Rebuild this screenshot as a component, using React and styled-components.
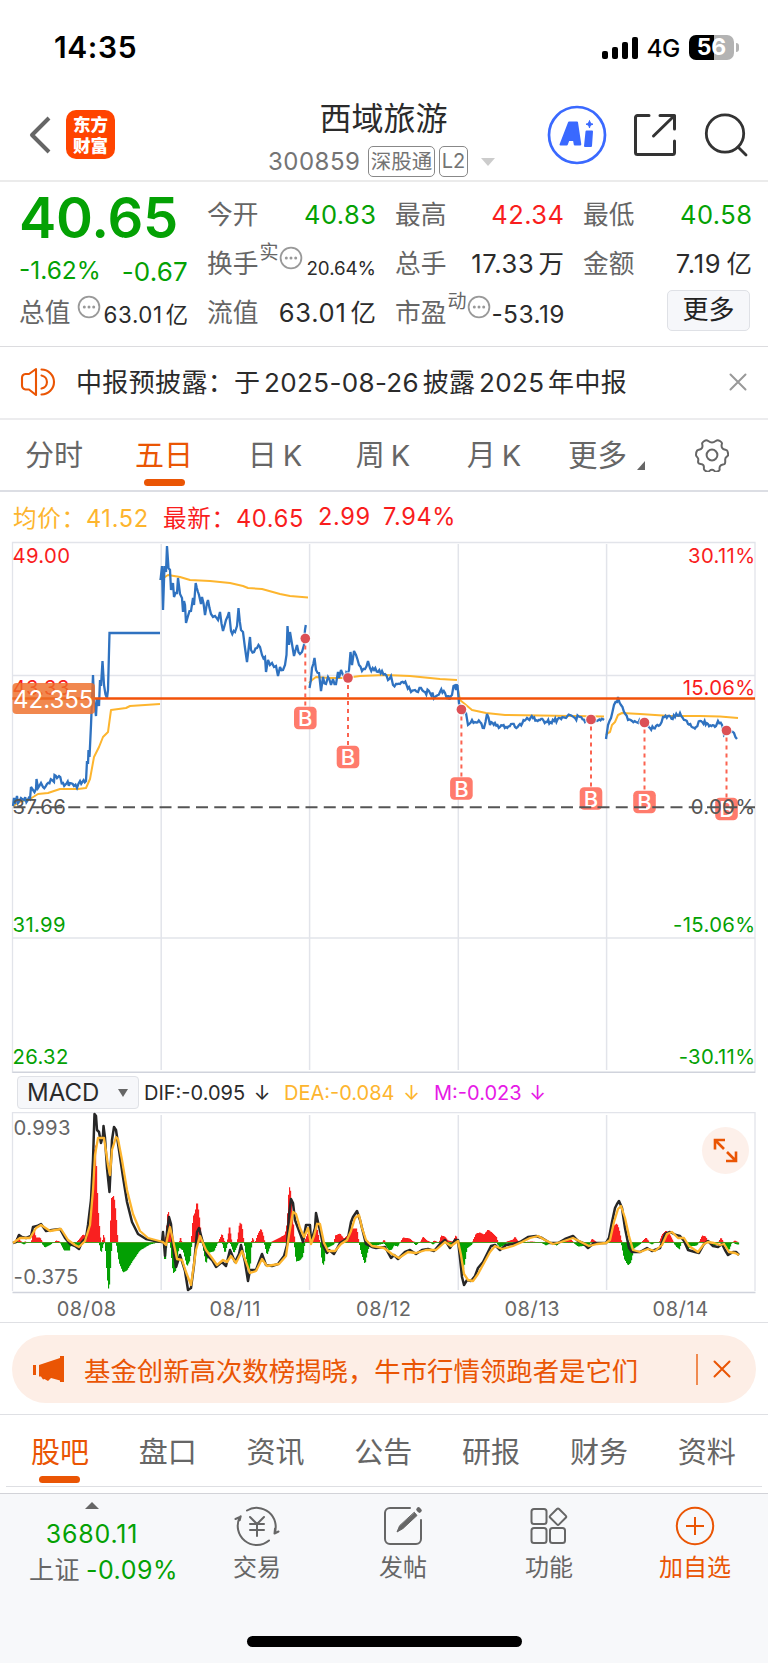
import React from "react";
import styled, { createGlobalStyle } from "styled-components";

const ORANGE = "#ea5504";
const GREEN = "#04a104";
const RED = "#f91d1d";
const BLUE = "#2f72c0";
const YELLOW = "#fdb52e";
const GRAY = "#666";
const INK = "#2b2b2b";
const FONT = 'Inter, "Noto Sans CJK SC", sans-serif';

const Global = createGlobalStyle`
  * { box-sizing: border-box; }
  body { margin: 0; background: #fff; font-family: ${FONT}; color: ${INK}; }
  svg { display: block; flex: none; }
  svg text { font-family: ${FONT}; }
`;

const Screen = styled.main`
  width: 768px;
  height: 1663px;
  display: flex;
  flex-direction: column;
  overflow: hidden;
  white-space: nowrap;
`;

/* ---------- status bar ---------- */
const StatusBar = styled.header`
  height: 95px;
  flex: none;
  display: flex;
  justify-content: space-between;
  padding: 0 29px 0 54px;
  color: #000;
`;
const Clock = styled.time`
  font-size: 30px;
  font-weight: 600;
  line-height: 95px;
  letter-spacing: 0.6px;
`;
const StatusIcons = styled.div`
  display: flex;
  align-items: center;
  height: 95px;
`;
const Signal = styled.div`
  display: flex;
  align-items: flex-end;
  gap: 3.7px;
  margin-right: 9px;
`;
const SignalBar = styled.i`
  width: 6px;
  height: ${(p) => p.$h}px;
  border-radius: 2px;
  background: #000;
`;
const Network = styled.span`
  font-size: 24.5px;
  font-weight: 500;
  width: 42.5px;
  letter-spacing: -0.5px;
`;
const Battery = styled.div`
  width: 45px;
  height: 25px;
  border-radius: 7px;
  background: linear-gradient(90deg, #000 56%, #b3b3b3 56%);
  color: #fff;
  font-size: 23px;
  font-weight: 700;
  line-height: 25px;
  text-align: center;
`;
const BatteryTip = styled.i`
  width: 3px;
  height: 9px;
  margin-left: 2px;
  border-radius: 0 4px 4px 0;
  background: #b3b3b3;
`;

/* ---------- title bar ---------- */
const TitleBar = styled.div`
  height: 87px;
  flex: none;
  display: flex;
  align-items: flex-start;
  border-bottom: 2px solid #ebebeb;
`;
const BackSide = styled.div`
  display: flex;
  align-items: center;
  width: 268px;
  padding: 15px 0 0 29px;
  gap: 15px;
`;
const BrandLogo = styled.div`
  width: 49px;
  height: 49px;
  border-radius: 10px;
  background: #ff4400;
  color: #fff;
  font: 900 17.5px/20.5px "Noto Sans CJK SC", sans-serif;
  text-align: center;
  padding-top: 4px;
`;
const TitleBlock = styled.div`
  width: 231px;
  display: flex;
  flex-direction: column;
`;
const StockName = styled.h1`
  margin: 0;
  width: 231px;
  text-align: center;
  font-size: 32px;
  line-height: 48px;
  font-weight: 400;
`;
const StockMeta = styled.div`
  display: flex;
  align-items: center;
  height: 37px;
  padding-top: 0;
  color: #747474;
`;
const StockCode = styled.span`
  font-size: 24px;
  width: 100px;
  letter-spacing: 0.5px;
`;
const Badge = styled.span`
  height: 31px;
  width: ${(p) => p.$w}px;
  margin-right: 4px;
  border: 1px solid #888;
  border-radius: 5px;
  font-size: ${(p) => p.$size}px;
  line-height: 29px;
  text-align: center;
`;
const DropMark = styled.i`
  margin-left: 9px;
  border: 7px solid transparent;
  border-top: 8px solid #ccc;
  border-bottom: 0;
`;
const TitleActions = styled.div`
  display: flex;
  align-items: center;
  gap: 26px;
  padding: 10px 0 0 48px;
`;

/* ---------- quote ---------- */
const Quote = styled.section`
  height: 165px;
  flex: none;
  display: grid;
  grid-template-columns: 169px 169px 169px 169px;
  column-gap: 19px;
  padding: 8px 16px 0 19px;
  border-bottom: 1px solid #dcdcdf;
`;
const QuoteColumn = styled.div`
  display: flex;
  flex-direction: column;
`;
const Price = styled.strong`
  height: 55px;
  font-size: 56px;
  line-height: 56px;
  font-weight: 600;
  color: ${GREEN};
  letter-spacing: -0.2px;
`;
const Change = styled.div`
  height: 43px;
  padding-top: 7px;
  display: flex;
  justify-content: space-between;
  align-items: center;
  color: ${GREEN};
  font-size: 24.5px;
`;
const ChangeAmount = styled.span`
  font-size: 26px;
  letter-spacing: 0.2px;
  padding-top: 2px;
`;
const StatRow = styled.div`
  height: 49px;
  display: flex;
  align-items: center;
  justify-content: space-between;
`;
const StatLabel = styled.span`
  display: flex;
  align-items: center;
  font-size: 25.7px;
  line-height: 49px;
  color: ${GRAY};
`;
const Sup = styled.span`
  min-width: 5px;
  margin: -21px 1px 0 1px;
  font-size: 19px;
  line-height: 20px;
`;
const InfoSvg = styled.svg`
  margin-top: -11px;
`;
const StatValue = styled.span`
  font-size: ${(p) => p.$size || 25.5}px;
  line-height: 49px;
  padding-top: ${(p) => p.$drop || 0}px;
  letter-spacing: ${(p) => (p.$track === undefined ? 0.45 : p.$track)}px;
  margin-right: ${(p) => (p.$track === undefined ? -0.45 : -p.$track)}px;
  color: ${(p) => p.$color || INK};
`;
const Unit = styled.span`
  margin-left: ${(p) => p.$gap}px;
`;
const MoreCell = styled(StatRow)`
  justify-content: flex-end;
  padding-right: 2px;
`;
const MoreButton = styled.button`
  width: 83px;
  height: 41px;
  padding: 0;
  margin-bottom: 5px;
  border: 1.5px solid #dfe1e6;
  border-radius: 5px;
  background: #f6f7fa;
  color: #222;
  font: 400 26px/38px ${FONT};
`;

/* ---------- notice ---------- */
const Notice = styled.section`
  height: 73px;
  flex: none;
  display: flex;
  align-items: center;
  padding: 0 21px 1px 20px;
  border-bottom: 2px solid #ececee;
`;
const NoticeText = styled.p`
  margin: 1px auto 0 20px;
  font-size: 26px;
  line-height: 70px;
  letter-spacing: 0.35px;
  word-spacing: -4px;
`;

/* ---------- tabs ---------- */
const PeriodTabs = styled.nav`
  height: 72px;
  flex: none;
  display: flex;
  align-items: stretch;
  border-bottom: 2px solid #dcdee4;
`;
const SectionTabs = styled.nav`
  height: 72px;
  flex: none;
  display: flex;
  margin: 0 6px;
  border-bottom: 1px solid #dedfe3;
`;
const Tab = styled.a`
  flex: none;
  width: ${(p) => p.$w}px;
  display: flex;
  flex-direction: column;
  align-items: center;
  font-size: 29px;
  line-height: ${(p) => p.$line || 72}px;
  word-spacing: -2px;
  color: ${(p) => (p.$active ? ORANGE : GRAY)};
  &::after {
    content: "";
    width: 41px;
    height: 7px;
    margin-top: ${(p) => p.$gap || -13}px;
    border-radius: 4px;
    background: ${(p) => (p.$active ? ORANGE : "transparent")};
  }
`;
const MoreTab = styled.a`
  flex: none;
  width: 127px;
  margin-left: 16px;
  display: flex;
  align-items: center;
  font-size: 29.5px;
  line-height: 72px;
  color: ${GRAY};
`;
const CornerMark = styled.i`
  margin: 21px 0 0 10px;
  border-left: 8px solid transparent;
  border-bottom: 9px solid ${GRAY};
`;
const SettingsTab = styled.a`
  display: flex;
  align-items: center;
`;

/* ---------- chart ---------- */
const Legend = styled.div`
  height: 49px;
  flex: none;
  display: flex;
  align-items: center;
  padding-left: 13px;
  font-size: 23.6px;
  color: ${RED};
`;
const LegendItem = styled.span`
  width: ${(p) => p.$w}px;
  letter-spacing: ${(p) => p.$track || 0}px;
  color: ${(p) => p.$color || RED};
`;
const MacdHeader = styled.div`
  height: 39px;
  flex: none;
  display: flex;
  align-items: center;
  padding-left: 17px;
  font-size: 20px;
`;
const IndicatorSelect = styled.div`
  width: 122px;
  height: 33px;
  display: flex;
  align-items: center;
  justify-content: space-between;
  padding: 0 10px 0 9px;
  margin-right: 5px;
  border: 1.5px solid #dfe1e6;
  border-radius: 4px;
  background: #f6f7fa;
  font-size: 24px;
`;
const SelectMark = styled.i`
  border: 5px solid transparent;
  border-top: 8px solid ${GRAY};
  border-bottom: 0;
`;
const Arrow = styled.span`
  margin-left: ${(p) => p.$gap || 2}px;
`;
const ChartArea = styled.div`
  position: relative;
  flex: none;
  height: ${(p) => p.$h}px;
`;
const ExpandButton = styled.button`
  position: absolute;
  right: 19px;
  top: 15px;
  width: 47px;
  height: 47px;
  padding: 0;
  border: 0;
  border-radius: 50%;
  background: #fdf0ea;
  display: grid;
  place-items: center;
`;
const DateAxis = styled.div`
  height: 29px;
  flex: none;
  display: grid;
  grid-template-columns: repeat(5, 148.5px);
  padding-left: 12.5px;
  border-bottom: 1px solid #dfe0e4;
  font-size: 20px;
  line-height: 30px;
  color: ${GRAY};
  text-align: center;
  letter-spacing: 0.6px;
`;

/* ---------- promo ---------- */
const PromoWrap = styled.div`
  height: 92px;
  flex: none;
  padding: 12px;
  border-bottom: 1px solid #dfe0e4;
`;
const Promo = styled.div`
  height: 68px;
  display: flex;
  align-items: center;
  border-radius: 34px;
  background: #fdeee6;
  padding: 0 25px 0 20px;
  color: ${ORANGE};
  font-size: 26.4px;
`;
const PromoText = styled.span`
  margin: 1px auto 0 19px;
`;
const PromoDivider = styled.i`
  width: 2px;
  height: 31px;
  margin-right: 15px;
  background: #f08a50;
`;

/* ---------- bottom bar ---------- */
const BottomBar = styled.footer`
  margin-top: 6px;
  flex: 1;
  display: flex;
  flex-direction: column;
  justify-content: space-between;
  align-items: center;
  border-top: 1.5px solid #d2d3d8;
  background: #f7f8fa;
`;
const BottomItems = styled.div`
  width: 768px;
  display: flex;
`;
const IndexCell = styled.div`
  width: 184px;
  display: flex;
  flex-direction: column;
  align-items: center;
  padding-top: 8px;
  font-size: 25px;
  line-height: 36px;
  color: ${GREEN};
`;
const UpMark = styled.i`
  border: 7px solid transparent;
  border-bottom: 7px solid ${GRAY};
  border-top: 0;
  margin-bottom: 7px;
`;
const IndexLine = styled.span`
  padding-left: ${(p) => p.$shift || 0}px;
  letter-spacing: ${(p) => p.$track || 0}px;
`;
const IndexName = styled.span`
  color: ${GRAY};
  margin-right: 6px;
`;
const Action = styled.a`
  width: 146px;
  display: flex;
  flex-direction: column;
  align-items: center;
  padding-top: 12px;
  font-size: 24px;
  line-height: 44px;
  color: ${(p) => (p.$hot ? ORANGE : GRAY)};
`;
const HomeIndicator = styled.i`
  width: 275px;
  height: 11px;
  margin-bottom: 16px;
  border-radius: 6px;
  background: #000;
`;

/* ---------- icons ---------- */
const line = { fill: "none", strokeLinecap: "round", strokeLinejoin: "round" };

const InfoDots = () => (
  <InfoSvg width="24" height="24" viewBox="0 0 24 24">
    <circle cx="12" cy="12" r="10.4" fill="none" stroke="#999" strokeWidth="1.8" />
    {[7.3, 12, 16.7].map((x) => <circle key={x} cx={x} cy="12" r="1.5" fill="#999" />)}
  </InfoSvg>
);
const BackIcon = () => (
  <svg width="22" height="38" viewBox="0 0 22 38" {...line} strokeLinecap="butt" stroke="#666" strokeWidth="4">
    <path d="M20 2 3 19l17 17" />
  </svg>
);
const AiIcon = () => (
  <svg width="60" height="60" viewBox="0 0 60 60">
    <circle cx="30" cy="30" r="28" fill="none" stroke="#3a69ff" strokeWidth="2.7" />
    <g fill="#3a69ff" stroke="#3a69ff" strokeWidth="2" strokeLinejoin="round">
      <path fillRule="evenodd" d="m22 17.500 8 0 3.300 22-5.500 0-.8-4.500-5.500 0-1.700 4.500-6.300 0zM25.500 24.500l-2.300 5.500 3.200 0z" strokeWidth="2" />
      <path d="m39.500 26.500 5.500 0-1 14.500-6 0z" />
      <path d="M42.500 15.500c.5 2.500 1.400 3.200 3.500 3.700-2.100.5-3 1.300-3.500 3.700-.5-2.400-1.400-3.200-3.500-3.700 2.100-.5 3-1.200 3.500-3.700z" strokeWidth="1" />
    </g>
  </svg>
);
const ShareIcon = () => (
  <svg width="44" height="44" viewBox="0 0 44 44" {...line} stroke="#333" strokeWidth="3">
    <path d="M16 2.500H4.500a2 2 0 0 0-2 2v35a2 2 0 0 0 2 2h35a2 2 0 0 0 2-2V28M27 2.500h14.500V16M41 3 20.500 23" />
  </svg>
);
const SearchIcon = () => (
  <svg width="46" height="46" viewBox="0 0 46 46" {...line} stroke="#333" strokeWidth="2.800">
    <circle cx="22" cy="21.500" r="18.700" />
    <path d="m35 35 8 8" />
  </svg>
);
const SpeakerIcon = () => (
  <svg width="36" height="32" viewBox="0 0 36 32" {...line} stroke={ORANGE} strokeWidth="2.100">
    <path d="M9 8H5.500A4 4 0 0 0 2 12v8a4 4 0 0 0 3.500 3.500H9L16 29V3zM21.500 3.500a12.500 12.500 0 0 1 0 25M21.500 9.500a6.600 6.600 0 0 1 0 13" />
  </svg>
);
const CloseIcon = ({ color, size, weight }) => (
  <svg width={size} height={size} viewBox="0 0 18 18" {...line} stroke={color} strokeWidth={weight}>
    <path d="m1.500 1.500 15 15m0-15-15 15" />
  </svg>
);
const GearIcon = () => (
  <svg width="34" height="34" viewBox="0 0 34 34" {...line} stroke="#666" strokeWidth="2">
    <path d="M11.500 2.200c1.500 0 2.500 2.300 5.500 2.300s4-2.300 5.500-2.300 4.500 1.800 4.500 3-1.200 2.300.2 4.700 4.600 1.400 5.200 3.100.8 2.600.8 4-3 1.500-3 4.200.3 3.200-.4 4.500-3.500.2-4.800 2.500.4 3.400-.8 4.300-2.600 1.600-3.700 1.200-1.500-2-3.500-2-2.500 1.600-3.700 2-3.500-.9-4.200-2.200.5-2.500-.8-4.300-4-.6-4.900-2.200.3-2.600-.2-4.300S1 18.500 1 17s.3-3.500 1.200-4.500 3.500-.3 4.800-2.500-.2-3.700.2-4.900 2.800-2.900 4.300-2.900z" />
    <circle cx="17" cy="17" r="5.400" />
  </svg>
);
const ExpandIcon = () => (
  <svg width="25" height="25" viewBox="0 0 25 25" fill="none" stroke={ORANGE} strokeWidth="2.600">
    <path d="M2 11.500V2h10M2 2l9 9M23 13.500V23H13M23 23l-9-9" />
  </svg>
);
const MegaphoneIcon = () => (
  <svg width="33" height="28" viewBox="0 0 33 28" fill={ORANGE}>
    <path d="M1 10h3v10H1zM7 10l21-7V1h4v26h-4v-1.500l-9-2.500-3 3-3.500-2-1.500.5-2-3H7z" />
  </svg>
);
const TradeIcon = () => (
  <svg width="46" height="40" viewBox="0 0 46 40" {...line} stroke="#666" strokeWidth="2">
    <path d="M13 4.500A19 19 0 0 1 40.500 27.500l4-2M35 34.500A19 19 0 0 1 6 11L1.500 13M6 11l.7-.7-1 4M40.500 27.500l.5-5M16 11l7 7 7-7M23 18v12M16 18h14M16 24h14" />
  </svg>
);
const PostIcon = () => (
  <svg width="40" height="40" viewBox="0 0 40 40" {...line} stroke="#666" strokeWidth="2">
    <path d="M27 2H7a5 5 0 0 0-5 5v26a5 5 0 0 0 5 5h26a5 5 0 0 0 5-5V14" />
    <path d="M31.500 6.500 34 9.500 20 22.500l-6 3.500L16.500 20z" fill="#666" strokeWidth="1" />
    <path d="m35.500 3.500 1 1" strokeWidth="4.500" />
  </svg>
);
const AppsIcon = () => (
  <svg width="38" height="40" viewBox="0 0 38 40" {...line} stroke="#666" strokeWidth="2">
    <rect x="1.500" y="3" width="15" height="15" rx="2.500" />
    <rect x="1.500" y="22" width="15" height="15" rx="2.500" />
    <rect x="20" y="22" width="15" height="15" rx="2.500" />
    <rect x="-6.200" y="-6.200" width="12.400" height="12.400" rx="1.500" transform="translate(28 10.700) rotate(45)" />
  </svg>
);
const AddIcon = () => (
  <svg width="40" height="40" viewBox="0 0 40 40" {...line} strokeLinecap="butt" stroke={ORANGE} strokeWidth="2">
    <circle cx="20" cy="20" r="18.200" />
    <path d="M20 11v18M11 20h18" />
  </svg>
);

/* ---------- chart data: x y pairs, one string per trading day ---------- */
const PRICE = [
  "13,806 14,798 15,804 17,796 18,803 21,798 24,800 30,799 31,787 33,790 36,789 36.5,779 38,788 41,783 43,787 47,784 52,780 54,782 54.5,775 57,778 59,776 63,783 70,783 74,786 77,788 80,781 86,781 87,761 88,764 88.5,750 89.5,757 91,725 93,675 94,700 96,716 97,698 99,706 100,680 101,686 102.500,661 104,685 107,698 108,690 109.500,633 160,633",
  "160.500,580 162,566 163,610 164.500,566 166,572 167,546 168.500,568 170,570 171,590 173,583 174,597 177,593 178,578 180,594 182,598 183,612 184,601 185,605 186,623 188,616 191,611 193,598 194,605 195.700,583 198,592 199,595 201,604 202,597 205,615 207,603 208,600 211,614 213,617 215,616 218,620 220,612 223,631 226,620 229,612 231,631 235,632 237,626 238.500,608 241,630 243,632 245,648 247,662 250,637 251,650 254,652 257,648 260,647 262,655 265,657 266,672 268,660 270,665 272,663 274,667 276,666 278,676 280,667 283,670 285,665 286.500,655 287.500,626 289,645 290,632 292,644 294,656 297,645 300,654 302,652 304,645 305,630 305.800,625",
  "309.500,688 312,668 314.500,658 316,670 319,673 321,691 323,677 326,684 328,677 331,685 333,679 336,684 338,672 339,678 341,670 343,675 345,678 349,670 350.500,652 352,665 354,651 356,655 359,665 362,671 365,669 368,661 370,668 374,670 378,672 382,671 385,674 388,680 391,676 393,685 396,684 400,684 404,683 409,687 411,692 415,690 418,692 421,688 425,692 430,693 435,697 440,692 445,693 447,699 452,695 453.500,686 456,690 457,684",
  "457.500,685 459,703 461,709 466,713 468,725 472,720 475,722 480,722 484,728 487,714 490,725 495,723 500,727 506,727 511,724 515,727 520,724 527,718 533,718 540,720 547,722 554,721 560,718 566,718 570,715 575,718 580,717 585,722 590,719 597,721 604,720",
  "606,739 608,725 611,718 614,705 617,702 618,697 621,705 624,712 628,720 632,721 636,722 644,722 650,728 656,726 660,725 663,717 668,716 675,717 680,713 684,720 688,724 696,727 700,721 708,724 716,726 718,721 722,725 724,735 727,728 731,732 734,733 737,739",
];
const AVERAGE = [
  "13,806 22,801 30,799 38,794 48,793 60,789 78,789 86,788 90,779 94,757 99,747 103,737 108,732 111,710 126,708 130,706 160,704",
  "160.500,580 162,574 165,577 168,575 180,577 190,580 210,581 230,583 243,586 248,588 262,589 280,594 290,596 308,597.500",
  "309,683 312,680 316,677 330,678 345,678 360,676 385,675 410,676 440,679 457,680",
  "458,690 460,700 466,705 472,710 486,713 505,715 540,715.500 604,716.500",
  "606,735 608,733 610,732 612,725 615,722 618,715 622,713 640,714 670,716 700,716 720,716.500 738,718",
];
const DIF = "13,1243 16,1242 19,1235 22,1237 26,1238 31,1236 33,1227 37,1226 41,1224 46,1231 52,1230 60,1229 65,1238 70,1244 75,1246 79,1249 82,1242 86,1238 88,1225 91,1200 93,1160 94.500,1114 96,1116 97,1130 99,1132 101,1143 103,1135 103.500,1126 105,1138 107,1168 109.500,1192 112,1140 114,1127 116,1130 119,1150 123,1177 127,1202 132,1222 138,1234 146,1239 155,1241 162,1242 163,1232 165,1256 167,1232 169,1217 171,1224 173,1247 176,1267 180,1255 185,1271 188,1290 191,1288 194,1265 197,1232 199,1228 203,1243 207,1255 212,1260 216,1267 222,1262 226,1266 230,1250 235,1262 239,1254 241,1245 245,1262 248,1281 250,1270 256,1270 259,1262 262,1254 266,1265 272,1266 278,1264 284,1256 287,1245 289,1215 291,1199 293,1203 295,1220 298,1228 301,1236 303,1242 306,1225 310,1225 311,1242 315,1228 316,1213 318,1222 321,1235 323,1245 327,1253 329,1250 334,1254 340,1243 348,1238 351,1222 353,1217 357,1211 360,1220 363,1232 366,1244 372,1247 376,1248 385,1247 391,1258 394,1255 398,1259 405,1252 410,1250 416,1254 422,1250 428,1249 434,1251 440,1244 445,1240 450,1248 455,1240 458,1240 460,1258 462,1277 464,1285 467,1280 471,1281 475,1276 478,1268 483,1262 488,1252 491,1246 495,1245 500,1250 506,1245 513,1244 520,1242 528,1237 536,1236 542,1238 550,1243 558,1243 565,1239 573,1236 578,1241 583,1243 588,1248 594,1243 606,1243 609,1238 612,1222 615,1208 617,1204 619,1201 622,1208 625,1228 629,1248 632,1252 640,1252 647,1248 652,1251 660,1248 665,1234 670,1232 676,1235 680,1236 684,1241 688,1250 695,1252 699,1253 704,1244 708,1241 713,1246 718,1247 722,1244 725,1250 728,1255 733,1252 736,1252 739,1255";
const DEA = "13,1243 20,1238 30,1238 36,1228 41,1225 50,1231 61,1229 68,1240 75,1245 79,1247 85,1241 90,1225 93,1190 95,1155 98,1138 104,1138 108,1165 110,1175 112,1150 116,1137 118,1139 122,1160 127,1190 133,1214 140,1231 148,1238 163,1242 166,1245 168,1235 170,1227 173,1240 177,1259 182,1260 186,1272 191,1285 196,1250 200,1236 206,1250 212,1258 217,1265 223,1260 227,1262 231,1256 236,1263 242,1251 246,1262 250,1273 256,1271 262,1259 267,1266 279,1264 286,1256 289,1235 293,1212 296,1214 300,1228 304,1237 308,1228 311,1244 314,1236 317,1224 320,1224 324,1243 328,1251 335,1251 341,1244 347,1240 351,1231 355,1218 359,1215 362,1228 366,1240 372,1246 384,1248 392,1254 399,1258 408,1252 416,1253 426,1250 436,1250 445,1242 451,1246 458,1241 461,1255 464,1274 468,1280 473,1281 478,1274 484,1263 490,1252 495,1246 502,1249 513,1246 522,1242 530,1238 538,1236 545,1240 553,1244 561,1242 573,1238 581,1242 589,1246 597,1244 606,1243 610,1240 614,1222 618,1209 621,1206 625,1218 629,1236 633,1250 640,1252 648,1249 655,1251 662,1245 667,1234 672,1232 678,1238 684,1238 689,1246 698,1252 704,1244 708,1242 714,1243 720,1245 724,1244 729,1252 735,1253 739,1255";
/* histogram envelope: x,height pairs */
const RISE = "13,0 15,1 18,8 20,2 23,0 25,1 29,0 31,0 34,14 36,5 40,5 43,0 54,0 56,2 60,1 61,0 76,0 78,2 83,8 87,6 90,20 93,60 95,104 96,90 98,36 100,10 101,0 102,0 104,10 105,0 110,0 111,44 114,47 116,30 118,0 162,0 163,15 164,0 165,0 168,34 170,20 173,0 179,0 180.500,6 182,0 191,0 193,26 195,30 197,42 199,30 202,0 218,0 222,9 225,0 227,0 229.500,18 232,0 237,0 239.500,20 242,18 244,0 251,0 253,6 254,0 255,0 258,9 261,14 263,9 265,0 270,0 276,3 280,5 285,8 287,20 289,57 291,50 293,24 295,0 304,0 308,10 311,0 314,14 316,20 318,10 320,0 334,0 335,7 340,9 344,4 348,8 352,14 357,14 359,0 382,0 384,3 386,0 400,0 403,5 410,4 413,1 420,0 423,6 427,2 432,0 434,2 439,0 441,7 445,6 448,2 453,1 456,8 458,0 472,0 476,9 480,10 484,8 488,13 492,10 497,5 498,0 504,0 507,1 513,3 515,6 519,0 532,1 540,0 562,0 570,4 574,0 590,0 592,4 597,0 607,0 611,6 614,17 617,19 619,14 622,0 641,0 646,5 650,0 659,0 662,8 666,12 670,8 674,0 699,0 702,7 706,6 708,0 718,0 721,5 724,0 732,0 735,2 739,0";
const FALL = "20,0 22,1 24,2 27,0 41,0 45,5 51,2 53,0 60,0 64,8 70,8 71,0 74,0 77,6 80,2 82,0 99,0 101,11 104,0 105,0 107,34 109,50 110,34 112,0 116,0 119,20 123,30 127,28 133,18 140,8 150,2 158,0 163,0 165,22 167,0 170,0 173,31 176,28 179,5 183,8 187,24 190,18 192,0 202,0 206,22 209,10 214,9 218,0 222,0 225,11 228,0 230,0 234,11 237,4 239,0 244,0 247,20 250,32 251,10 252,0 264,0 267,13 271,2 272,0 294,0 296,19 300,18 303,14 305,0 320,0 322,20 324,23 326,6 334,2 335,0 359,0 361,10 365,22 368,8 370,2 376,3 384,1 385,2 389,8 392,7 394,3 398,4 400,0 413,0 416,3 419,0 430,0 433,2 436,0 448,0 450,5 452,0 458,0 460,15 462,33 465,20 467,6 472,2 473,0 496,0 500,5 507,1 510,2 513,0 541,0 546,3 550,1 557,3 560,0 573,0 578,4 589,3 591,0 600,1 604,0 621,0 624,16 628,23 631,20 634,6 640,2 642,0 648,0 652,2 655,0 673,0 677,5 680,7 681,0 685,0 688,10 690,4 697,3 699,0 708,0 713,4 717,2 718,0 724,0 729,8 732,0 737,2 739,2";
const BUYS = [
  [305.3, 638.5, 718], [348, 678, 757], [461.4, 709.5, 788.5],
  [591, 719.5, 798.5], [644.5, 722.5, 802], [726.5, 730.5, 809],
];
const DAY_LINES = [161.2, 309.6, 458.3, 606.6];

const parse = (s) => s.split(" ").map((p) => p.split(",").map(Number));

/* adds tick-level movement between the sampled prices */
function withTicks(s, day) {
  const pts = parse(s);
  const out = [];
  for (let i = 0; i < pts.length - 1; i++) {
    const [x0, y0] = pts[i];
    const [x1, y1] = pts[i + 1];
    out.push([x0, y0]);
    const n = Math.floor((x1 - x0) / 1.1);
    if (x1 - x0 > 20) continue;
    for (let k = 1; k < n; k++) {
      const t = k / n;
      const r = Math.sin((x0 + k * 7.3 + day * 11) * 12.9898) * 43758.5453;
      const noise = (r - Math.floor(r) - 0.5) * 2;
      out.push([x0 + (x1 - x0) * t, y0 + (y1 - y0) * t + noise * (day > 2 ? 2.4 : 3)]);
    }
  }
  out.push(pts[pts.length - 1]);
  return out.map((p) => p.map((v) => v.toFixed(1)).join(",")).join(" ");
}

/* one-pixel columns following the histogram envelope */
function columns(s, sign) {
  const pts = parse(s);
  let d = "";
  for (let i = 0; i < pts.length - 1; i++) {
    const [x0, h0] = pts[i];
    const [x1, h1] = pts[i + 1];
    if (h0 === 0 && h1 === 0) continue;
    const n = Math.max(1, Math.round(x1 - x0));
    for (let k = 0; k < n; k++) {
      const h = h0 + ((h1 - h0) * (k + 0.5)) / n;
      d += `M${x0 + ((x1 - x0) * k) / n} 1242.5v${(-sign * h).toFixed(1)}h${((x1 - x0) / n + 0.15).toFixed(2)}V1242.5z`;
    }
  }
  return d;
}

const AxisText = ({ x, y, end, color, size = 20.3, track = 0.35, children }) => (
  <text x={x} y={y} textAnchor={end ? "end" : "start"} fill={color} fontSize={size} letterSpacing={track}>{children}</text>
);

const PriceChart = () => (
  <svg width="768" height="532" viewBox="0 541 768 532">
    <g stroke="#e2e4ea" strokeWidth="1.300" fill="none">
      <path d="M12.500 1073V542.500H755V1073M12.500 675.500H755" />
      <path d="M12.500 938H755" strokeWidth="1.500" />
      {DAY_LINES.map((x) => <path key={x} d={`M${x} 544V1070`} strokeWidth="1.500" />)}
      <path d="M12.500 1072.200H755" stroke="#d0d3dc" strokeWidth="1.500" />
    </g>
    <AxisText x={12.5} y={562.5} color={RED}>49.00</AxisText>
    <AxisText x={12.5} y={695} color={RED}>43.33</AxisText>
    <AxisText x={12.5} y={932} color={GREEN}>31.99</AxisText>
    <AxisText x={12.5} y={1064} color={GREEN}>26.32</AxisText>
    <AxisText x={755.5} y={562.5} end color={RED}>30.11%</AxisText>
    <AxisText x={755.5} y={695} end color={RED}>15.06%</AxisText>
    <AxisText x={755.5} y={932} end color={GREEN}>-15.06%</AxisText>
    <AxisText x={755.5} y={1064} end color={GREEN}>-30.11%</AxisText>
    <g fill="none" strokeLinejoin="round">
      {AVERAGE.map((s) => <polyline key={s} points={s} stroke={YELLOW} strokeWidth="2" />)}
      {PRICE.map((s, i) => (
        <polyline key={i} points={withTicks(s, i)} stroke={BLUE} strokeWidth="2.300" strokeLinejoin="miter" strokeMiterlimit="3" />
      ))}
      <path d="M12.500 698.500H755" stroke="#f25208" strokeWidth="2.400" />
    </g>
    {BUYS.map(([x, y, by]) => (
      <g key={x}>
        <path d={`M${x} ${y + 7}V${by - 11}`} stroke="#fb6350" strokeWidth="2" strokeDasharray="4 4" />
        <circle cx={x} cy={y} r="6" fill="#fff" opacity=".7" />
        <circle cx={x} cy={y} r="4.800" fill="#dc5055" />
        <rect x={x - 11.3} y={by - 11.3} width="22.600" height="22.600" rx="4.500" fill="#ff7b6c" />
        <text x={x} y={by + 8} textAnchor="middle" fontSize="22" fontWeight="500" fill="#fff">B</text>
      </g>
    ))}
    <path d="M13.500 807.200H755" stroke="#555" strokeWidth="1.900" strokeDasharray="12 6.250" />
    <AxisText x={12.5} y={814} color="#555">37.66</AxisText>
    <AxisText x={755.5} y={814} end color="#555">0.00%</AxisText>
    <rect x="12.500" y="683" width="82.500" height="31" rx="4" fill="#ee6e28" opacity=".82" />
    <AxisText x={13} y={708} size={24} track={0} color="#fff">42.355</AxisText>
  </svg>
);

const MacdChart = () => (
  <svg width="768" height="182" viewBox="0 1112 768 182">
    <g stroke="#e2e4ea" strokeWidth="1.300" fill="none">
      <path d="M12.500 1291V1112.700H755V1291" />
      {DAY_LINES.map((x) => <path key={x} d={`M${x} 1115V1290`} strokeWidth="1.500" />)}
      <path d="M12.500 1292.500H755.500" stroke="#d0d3dc" strokeWidth="1.600" />
    </g>
    <path d={columns(RISE, 1)} fill="#f92020" />
    <path d={columns(FALL, -1)} fill="#03a003" />
    <path d="M13 1242.500H738" stroke="#4a9a20" strokeWidth="1" />
    <g fill="none" strokeLinejoin="round">
      <polyline points={DIF} stroke="#272727" strokeWidth="2.500" />
      <polyline points={DEA} stroke={YELLOW} strokeWidth="2.300" />
    </g>
    <AxisText x={13.5} y={1134.5} color={GRAY}>0.993</AxisText>
    <AxisText x={13.5} y={1284} color={GRAY}>-0.375</AxisText>
  </svg>
);

const Stat = ({ label, sup, value, unit, unitGap = 3, ...rest }) => (
  <StatRow>
    <StatLabel>{label}{sup !== undefined && <><Sup>{sup}</Sup><InfoDots /></>}</StatLabel>
    <StatValue {...rest}>{value}{unit && <Unit $gap={unitGap}>{unit}</Unit>}</StatValue>
  </StatRow>
);

export default function App() {
  return (
    <Screen>
      <Global />
      <StatusBar>
        <Clock>14:35</Clock>
        <StatusIcons>
          <Signal>{[8, 12, 17, 22].map((h) => <SignalBar key={h} $h={h} />)}</Signal>
          <Network>4G</Network>
          <Battery>56</Battery>
          <BatteryTip />
        </StatusIcons>
      </StatusBar>

      <TitleBar>
        <BackSide>
          <BackIcon />
          <BrandLogo>东方<br />财富</BrandLogo>
        </BackSide>
        <TitleBlock>
          <StockName>西域旅游</StockName>
          <StockMeta>
            <StockCode>300859</StockCode>
            <Badge $w={67} $size={20.5}>深股通</Badge>
            <Badge $w={29} $size={20}>L2</Badge>
            <DropMark />
          </StockMeta>
        </TitleBlock>
        <TitleActions>
          <AiIcon />
          <ShareIcon />
          <SearchIcon />
        </TitleActions>
      </TitleBar>

      <Quote>
        <QuoteColumn>
          <Price>40.65</Price>
          <Change><span>-1.62%</span><ChangeAmount>-0.67</ChangeAmount></Change>
          <Stat label="总值" sup="" value="63.01" unit="亿" $size={22.3} $drop={4} $track={0.6} />
        </QuoteColumn>
        <QuoteColumn>
          <Stat label="今开" value="40.83" $color={GREEN} />
          <Stat label="换手" sup="实" value="20.64%" $size={18.8} $drop={9} $track={-0.1} />
          <Stat label="流值" value="63.01" unit="亿" unitGap={4} $track={0.7} />
        </QuoteColumn>
        <QuoteColumn>
          <Stat label="最高" value="42.34" $color={RED} />
          <Stat label="总手" value="17.33" unit="万" unitGap={4} $track={0.7} />
          <Stat label="市盈" sup="动" value="-53.19" $size={24.5} $drop={3} />
        </QuoteColumn>
        <QuoteColumn>
          <Stat label="最低" value="40.58" $color={GREEN} />
          <Stat label="金额" value="7.19" unit="亿" unitGap={5} $track={0.8} />
          <MoreCell><MoreButton>更多</MoreButton></MoreCell>
        </QuoteColumn>
      </Quote>

      <Notice>
        <SpeakerIcon />
        <NoticeText>中报预披露：于 2025-08-26 披露 2025 年中报</NoticeText>
        <CloseIcon color="#999" size={18} weight={2} />
      </Notice>

      <PeriodTabs>
        <Tab $w={108}>分时</Tab>
        <Tab $w={112} $active>五日</Tab>
        <Tab $w={110}>日 K</Tab>
        <Tab $w={106}>周 K</Tab>
        <Tab $w={116}>月 K</Tab>
        <MoreTab>更多<CornerMark /></MoreTab>
        <SettingsTab><GearIcon /></SettingsTab>
      </PeriodTabs>

      <Legend>
        <LegendItem $w={150} $track={0.7} $color={YELLOW}>均价：41.52</LegendItem>
        <LegendItem $w={155} $track={0.7}>最新：40.65</LegendItem>
        <LegendItem $w={65} $track={0.6}>2.99</LegendItem>
        <LegendItem $track={0.6}>7.94%</LegendItem>
      </Legend>
      <ChartArea $h={532}><PriceChart /></ChartArea>

      <MacdHeader>
        <IndicatorSelect>MACD<SelectMark /></IndicatorSelect>
        <LegendItem $w={140} $color={INK}>DIF:-0.095 <Arrow $gap={3}>↓</Arrow></LegendItem>
        <LegendItem $w={150} $color={YELLOW}>DEA:-0.084 <Arrow $gap={3}>↓</Arrow></LegendItem>
        <LegendItem $color="#e619e6">M:-0.023 <Arrow>↓</Arrow></LegendItem>
      </MacdHeader>
      <ChartArea $h={182}>
        <MacdChart />
        <ExpandButton><ExpandIcon /></ExpandButton>
      </ChartArea>
      <DateAxis>
        {["08/08", "08/11", "08/12", "08/13", "08/14"].map((d) => <span key={d}>{d}</span>)}
      </DateAxis>

      <PromoWrap>
        <Promo>
          <MegaphoneIcon />
          <PromoText>基金创新高次数榜揭晓，牛市行情领跑者是它们</PromoText>
          <PromoDivider />
          <CloseIcon color={ORANGE} size={18} weight={2} />
        </Promo>
      </PromoWrap>

      <SectionTabs>
        {["股吧", "盘口", "资讯", "公告", "研报", "财务", "资料"].map((t, i) => (
          <Tab key={t} $w={107.8} $line={75} $gap={-14} $active={i === 0}>{t}</Tab>
        ))}
      </SectionTabs>

      <BottomBar>
        <BottomItems>
          <IndexCell>
            <UpMark />
            <IndexLine $track={0.8}>3680.11</IndexLine>
            <IndexLine $shift={23} $track={0.5}><IndexName>上证</IndexName>-0.09%</IndexLine>
          </IndexCell>
          <Action><TradeIcon />交易</Action>
          <Action><PostIcon />发帖</Action>
          <Action><AppsIcon />功能</Action>
          <Action $hot><AddIcon />加自选</Action>
        </BottomItems>
        <HomeIndicator />
      </BottomBar>
    </Screen>
  );
}
